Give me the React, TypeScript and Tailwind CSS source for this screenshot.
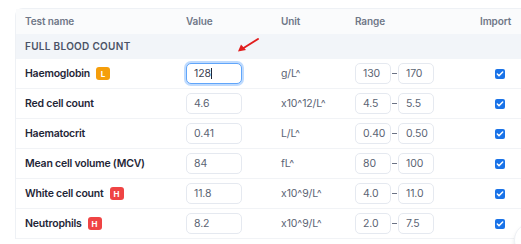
import { Check } from "lucide-react";

type Row = {
    name: string
    flag?: "L" | "H"
    value: string
    unit: string
    low: string
    high: string
    focused?: boolean
}

const rows: Row[] = [
    { name: "Haemoglobin", flag: "L", value: "128", unit: "g/L^", low: "130", high: "170", focused: true },
    { name: "Red cell count", value: "4.6", unit: "x10^12/L^", low: "4.5", high: "5.5" },
    { name: "Haematocrit", value: "0.41", unit: "L/L^", low: "0.40", high: "0.50" },
    { name: "Mean cell volume (MCV)", value: "84", unit: "fL^", low: "80", high: "100" },
    { name: "White cell count", flag: "H", value: "11.8", unit: "x10^9/L^", low: "4.0", high: "11.0" },
    { name: "Neutrophils", flag: "H", value: "8.2", unit: "x10^9/L^", low: "2.0", high: "7.5" },
]

const cols = "grid grid-cols-[161px_95px_74px_125px_1fr] items-center pl-[9px]"

const Flag = ({ flag }: { flag: "L" | "H" }) => (
    <span className={`ml-[6px] inline-flex h-[13px] w-[14px] items-center justify-center rounded-[3px] text-[8px] font-bold tracking-normal text-white ${flag === "L" ? "bg-[#f59e0b]" : "bg-[#ef4444]"}`}>
        {flag}
    </span>
)

const Box = ({ text, w }: { text: string, w: string }) => (
    <div className={`${w} flex h-[21px] items-center rounded-[5px] border border-[#e5e9f0] bg-white pl-[7px] text-[10.5px] tracking-[-0.01em] text-[#5b6474]`}>
        {text}
    </div>
)

const App = () => {
    return (
        <div className="relative h-[244px] w-[521px] overflow-hidden bg-white" style={{ fontFamily: "Inter, 'Noto Sans', sans-serif" }}>
            <div className="ml-[15px] mt-[8px] w-[540px] rounded-tl-lg border-l border-t border-[#eef1f5]">
                {/* Cabeçalho */}
                <div className={`${cols} h-[25px] bg-[#fafbfc] text-[10px] font-semibold tracking-[-0.01em] text-[#6f7787]`}>
                    <span>Test name</span>
                    <span>Value</span>
                    <span>Unit</span>
                    <span>Range</span>
                    <span>Import</span>
                </div>

                <div className="flex h-[25px] items-center bg-[#f2f5f9] pl-[9px] text-[10px] font-semibold tracking-[0.03em] text-[#4b5366]">
                    FULL BLOOD COUNT
                </div>

                {rows.map((row) => (
                    <div key={row.name} className={`${cols} h-[30px] border-b border-[#f1f3f6]`}>
                        <div className="flex items-center text-[10.5px] font-semibold tracking-[-0.02em] text-[#1f2637]">
                            {row.name}
                            {row.flag && <Flag flag={row.flag} />}
                        </div>
                        <div>
                            {row.focused ? (
                                <div className="flex h-[21px] w-[56px] items-center rounded-[5px] border border-[#60a5fa] bg-white pl-[7px] text-[10.5px] tracking-[-0.01em] text-[#3b4252] ring-2 ring-[#bfdbfe]">
                                    128<span className="h-[11px] w-px bg-[#1f2637]" />
                                </div>
                            ) : (
                                <Box text={row.value} w="w-[56px]" />
                            )}
                        </div>
                        <span className="text-[10.5px] tracking-[-0.01em] text-[#5b6474]">{row.unit}</span>
                        <div className="flex items-center">
                            <Box text={row.low} w="w-[36px]" />
                            <span className="mx-px h-px w-[5px] bg-[#6b7385]" />
                            <Box text={row.high} w="w-[36px]" />
                        </div>
                        <div className="pl-[15px]">
                            <span className="flex h-[10px] w-[10px] items-center justify-center rounded-[2px] bg-[#1a73e8]">
                                <Check size={8} strokeWidth={4.5} className="text-white" />
                            </span>
                        </div>
                    </div>
                ))}
            </div>

            {/* seta vermelha */}
            <svg className="absolute left-[236px] top-[37px]" width="24" height="16" viewBox="0 0 24 16">
                <line x1="22" y1="2" x2="6" y2="12" stroke="#e11d1d" strokeWidth="2" strokeLinecap="round" />
                <polygon points="2,14.5 5,7.5 10,13" fill="#e11d1d" />
            </svg>

            {/* botão flutuante */}
            <div className="absolute left-[514px] top-[223px] h-[34px] w-[34px] rounded-full border border-[#eef1f5] bg-white shadow-md" />
        </div>
    );
}

export default App;
